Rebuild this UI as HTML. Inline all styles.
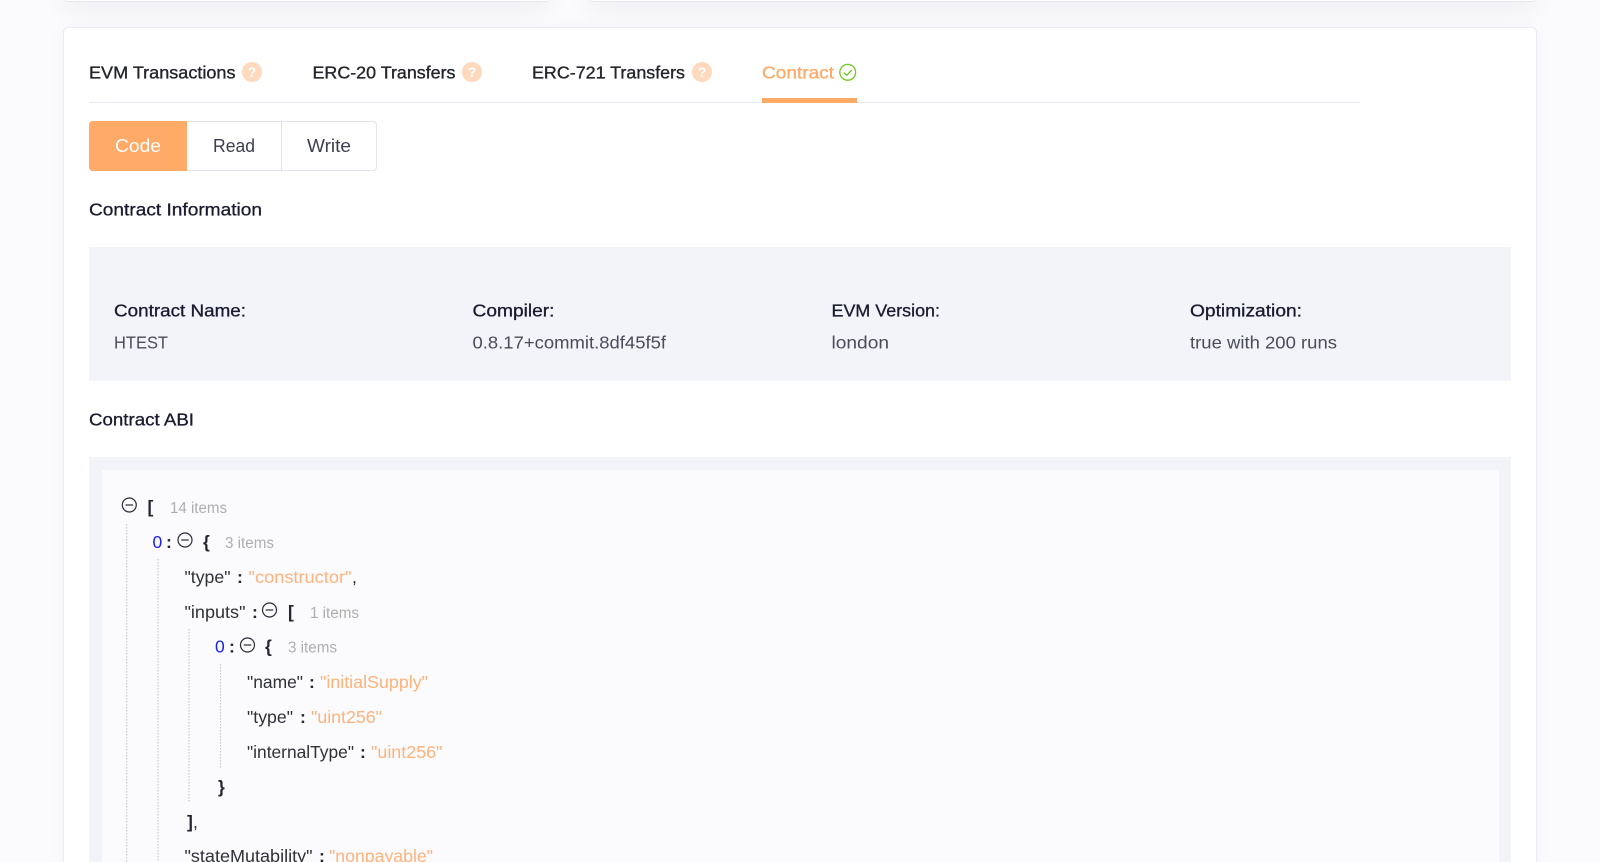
<!DOCTYPE html>
<html lang="en">
<head>
<meta charset="utf-8">
<title>Contract</title>
<style>
html,body{margin:0;padding:0;width:1600px;height:862px;overflow:hidden;background:#fbfbfd;}
#page{position:relative;width:1600px;height:862px;overflow:hidden;background:#fbfbfd;}
.box{position:absolute;box-sizing:border-box;}
.top{top:-20px;height:22px;background:#fff;border-radius:4px;border-bottom:1px solid #e6e7ee;box-shadow:0 6px 26px rgba(40,45,90,.07);}
#card{left:63px;top:27px;width:1474px;height:860px;background:#fff;border:1px solid #e9eaf2;border-radius:5px;box-shadow:0 2px 18px rgba(40,45,90,.035);}
#tabline{left:89px;top:101.5px;width:1271px;height:1px;background:#e6e9f0;}
#under{left:762px;top:98px;width:95px;height:4.5px;background:#ffaa66;}
#group{left:89px;top:121px;width:288px;height:50px;border:1px solid #e3e4ec;border-radius:4px;background:#fff;}
#code{left:89px;top:121px;width:98px;height:50px;background:#ffaa66;border-radius:4px 0 0 4px;}
#sep{left:281px;top:121px;width:1px;height:50px;background:#e3e4ec;}
#info{left:89px;top:247px;width:1422px;height:133.5px;background:#f3f4f9;}
#abi{left:89px;top:457px;width:1422px;height:420px;background:#f3f4f9;}
#inner{left:102px;top:469.5px;width:1397px;height:400px;background:#fbfbfd;}
svg{position:absolute;left:0;top:0;}
text{font-family:"Liberation Sans",Arial,sans-serif;}
.tab{font-size:17.5px;fill:#23252b;stroke:#23252b;stroke-width:.35px;}
.btn{font-size:18px;fill:#3d3f50;}
.hd{font-size:17.5px;fill:#191a2e;stroke:#191a2e;stroke-width:.3px;}
.val{font-size:17.5px;fill:#4a4c58;}
.j{font-size:17.5px;fill:#2f3038;}
.s{font-size:17.5px;fill:#ffb27a;}
.n{font-size:17.5px;fill:#1a22f0;}
.b{font-size:17.5px;font-weight:bold;fill:#23252f;}
.g{font-size:15.5px;fill:#aeaeae;}
.q{font-size:14px;font-weight:bold;fill:#fff;text-anchor:middle;}
.i{fill:none;stroke:#2a2c38;stroke-width:1.2;}
.d{stroke:#c9c9cf;stroke-width:1.2;stroke-dasharray:1.5 1.5;}
</style>
</head>
<body>
<div id="page">
<div class="box top" style="left:63px;width:486px"></div>
<div class="box top" style="left:589px;width:947px"></div>
<div class="box" id="card"></div>
<div class="box" id="tabline"></div>
<div class="box" id="under"></div>
<div class="box" id="group"></div>
<div class="box" id="code"></div>
<div class="box" id="sep"></div>
<div class="box" id="info"></div>
<div class="box" id="abi"></div>
<div class="box" id="inner"></div>
<svg width="1600" height="862" viewBox="0 0 1600 862" xmlns="http://www.w3.org/2000/svg">
  <!-- tabs -->
  <text class="tab" x="89" y="78.5" textLength="146.5" lengthAdjust="spacingAndGlyphs">EVM Transactions</text>
  <circle cx="252" cy="72" r="10" fill="#ffd9bd"/><text class="q" x="252" y="77">?</text>
  <text class="tab" x="312.5" y="78.5" textLength="143" lengthAdjust="spacingAndGlyphs">ERC-20 Transfers</text>
  <circle cx="472" cy="72" r="10" fill="#ffd9bd"/><text class="q" x="472" y="77">?</text>
  <text class="tab" x="532" y="78.5" textLength="153" lengthAdjust="spacingAndGlyphs">ERC-721 Transfers</text>
  <circle cx="702" cy="72" r="10" fill="#ffd9bd"/><text class="q" x="702" y="77">?</text>
  <text class="tab" style="fill:#ffaa66;stroke:#ffaa66" x="762" y="78.5" textLength="72" lengthAdjust="spacingAndGlyphs">Contract</text>
  <circle cx="847.7" cy="72.3" r="7.9" fill="none" stroke="#6fc91e" stroke-width="1.3"/>
  <path d="M843.8 72.6l2.9 2.8 5-5.4" fill="none" stroke="#6fc91e" stroke-width="1.3"/>

  <!-- buttons -->
  <text class="btn" style="fill:#fff" x="115" y="152" textLength="46" lengthAdjust="spacingAndGlyphs">Code</text>
  <text class="btn" x="213" y="152" textLength="42" lengthAdjust="spacingAndGlyphs">Read</text>
  <text class="btn" x="307" y="152" textLength="44" lengthAdjust="spacingAndGlyphs">Write</text>

  <text class="hd" x="89" y="215.5" textLength="173" lengthAdjust="spacingAndGlyphs">Contract Information</text>

  <!-- info -->
  <text class="hd" x="114" y="316.5" textLength="132" lengthAdjust="spacingAndGlyphs">Contract Name:</text>
  <text class="val" x="114" y="348.5" textLength="54" lengthAdjust="spacingAndGlyphs">HTEST</text>
  <text class="hd" x="472.5" y="316.5" textLength="82" lengthAdjust="spacingAndGlyphs">Compiler:</text>
  <text class="val" x="472.5" y="348.5" textLength="193.5" lengthAdjust="spacingAndGlyphs">0.8.17+commit.8df45f5f</text>
  <text class="hd" x="831.5" y="316.5" textLength="108.5" lengthAdjust="spacingAndGlyphs">EVM Version:</text>
  <text class="val" x="831.5" y="348.5" textLength="57.5" lengthAdjust="spacingAndGlyphs">london</text>
  <text class="hd" x="1190" y="316.5" textLength="112" lengthAdjust="spacingAndGlyphs">Optimization:</text>
  <text class="val" x="1190" y="348.5" textLength="147" lengthAdjust="spacingAndGlyphs">true with 200 runs</text>

  <text class="hd" x="89" y="425.5" textLength="105" lengthAdjust="spacingAndGlyphs">Contract ABI</text>

  <!-- dotted guides -->
  <line class="d" x1="126.7" y1="524" x2="126.7" y2="862"/>
  <line class="d" x1="158" y1="559" x2="158" y2="862"/>
  <line class="d" x1="189" y1="629" x2="189" y2="803"/>
  <line class="d" x1="220.5" y1="664" x2="220.5" y2="768"/>

  <!-- json: root -->
  <circle class="i" cx="129.3" cy="505" r="7"/><path class="i" d="M125.5 505h7.6"/>
  <text class="b" x="147.5" y="513">[</text>
  <text class="g" x="170" y="513" textLength="57" lengthAdjust="spacingAndGlyphs">14 items</text>

  <!-- 0 -->
  <text class="n" x="152.5" y="548">0</text><text class="b" x="166" y="548">:</text>
  <circle class="i" cx="185" cy="540" r="7"/><path class="i" d="M181.2 540h7.6"/>
  <text class="b" x="203" y="548">{</text>
  <text class="g" x="225" y="548" textLength="49" lengthAdjust="spacingAndGlyphs">3 items</text>

  <!-- type -->
  <text class="j" x="184.5" y="583" textLength="46" lengthAdjust="spacingAndGlyphs">"type"</text>
  <text class="b" x="237" y="583">:</text>
  <text class="s" x="248.5" y="583" textLength="103" lengthAdjust="spacingAndGlyphs">"constructor"</text>
  <text class="j" x="352" y="583">,</text>

  <!-- inputs -->
  <text class="j" x="184.5" y="618" textLength="61" lengthAdjust="spacingAndGlyphs">"inputs"</text>
  <text class="b" x="252" y="618">:</text>
  <circle class="i" cx="269.5" cy="610" r="7"/><path class="i" d="M265.7 610h7.6"/>
  <text class="b" x="288" y="618">[</text>
  <text class="g" x="310" y="618" textLength="49" lengthAdjust="spacingAndGlyphs">1 items</text>

  <!-- 0 -->
  <text class="n" x="215" y="652.5">0</text><text class="b" x="229" y="652.5">:</text>
  <circle class="i" cx="247.5" cy="645" r="7"/><path class="i" d="M243.7 645h7.6"/>
  <text class="b" x="265" y="652.5">{</text>
  <text class="g" x="288" y="652.5" textLength="49" lengthAdjust="spacingAndGlyphs">3 items</text>

  <!-- name -->
  <text class="j" x="247" y="688" textLength="56" lengthAdjust="spacingAndGlyphs">"name"</text>
  <text class="b" x="309" y="688">:</text>
  <text class="s" x="320" y="688" textLength="108" lengthAdjust="spacingAndGlyphs">"initialSupply"</text>

  <text class="j" x="247" y="723" textLength="46" lengthAdjust="spacingAndGlyphs">"type"</text>
  <text class="b" x="300" y="723">:</text>
  <text class="s" x="311" y="723" textLength="71" lengthAdjust="spacingAndGlyphs">"uint256"</text>

  <text class="j" x="247" y="758" textLength="107" lengthAdjust="spacingAndGlyphs">"internalType"</text>
  <text class="b" x="360" y="758">:</text>
  <text class="s" x="371" y="758" textLength="71.5" lengthAdjust="spacingAndGlyphs">"uint256"</text>

  <text class="b" x="218" y="793">}</text>
  <text class="b" x="187" y="828">]</text><text class="j" x="193" y="828">,</text>

  <text class="j" x="184.5" y="862" textLength="128" lengthAdjust="spacingAndGlyphs">"stateMutability"</text>
  <text class="b" x="319" y="862">:</text>
  <text class="s" x="329" y="862" textLength="104" lengthAdjust="spacingAndGlyphs">"nonpayable"</text>
</svg>
</div>
</body>
</html>
